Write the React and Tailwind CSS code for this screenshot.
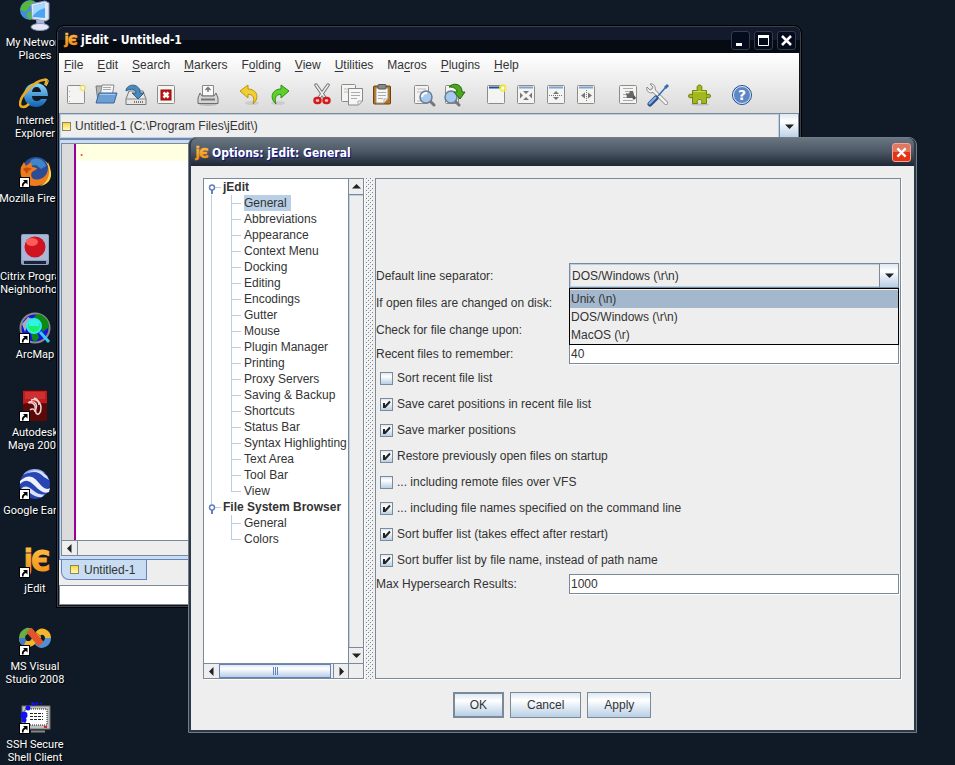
import React, { useState } from "react";

const menus = [
  ["", "F", "ile"],
  ["", "E", "dit"],
  ["", "S", "earch"],
  ["", "M", "arkers"],
  ["F", "o", "lding"],
  ["", "V", "iew"],
  ["", "U", "tilities"],
  ["Ma", "c", "ros"],
  ["", "P", "lugins"],
  ["", "H", "elp"],
];

const toolGroups = [
  ["New", "Open", "Save", "Close"],
  ["Print"],
  ["Undo", "Redo"],
  ["Cut", "Copy", "Paste"],
  ["Find", "Find Next"],
  ["New View", "Unsplit", "Split Horizontally", "Split Vertically"],
  ["Buffer Options", "Global Options"],
  ["Plugin Manager"],
  ["Help"],
];

const tree = [
  {
    name: "jEdit",
    items: [
      "General",
      "Abbreviations",
      "Appearance",
      "Context Menu",
      "Docking",
      "Editing",
      "Encodings",
      "Gutter",
      "Mouse",
      "Plugin Manager",
      "Printing",
      "Proxy Servers",
      "Saving & Backup",
      "Shortcuts",
      "Status Bar",
      "Syntax Highlighting",
      "Text Area",
      "Tool Bar",
      "View",
    ],
  },
  { name: "File System Browser", items: ["General", "Colors"] },
];

const checks = [
  { label: "Sort recent file list", on: false },
  { label: "Save caret positions in recent file list", on: true },
  { label: "Save marker positions", on: true },
  { label: "Restore previously open files on startup", on: true },
  { label: "... including remote files over VFS", on: false },
  { label: "... including file names specified on the command line", on: true },
  { label: "Sort buffer list (takes effect after restart)", on: true },
  { label: "Sort buffer list by file name, instead of path name", on: true },
];

const separators = ["Unix (\\n)", "DOS/Windows (\\r\\n)", "MacOS (\\r)"];

const metal = "bg-linear-to-b from-[#dde8f3] via-white via-30% to-[#b8cfe5]";

const JEditLogo = ({ className }) => (
  <svg className={className} viewBox="0 0 32 32" aria-hidden="true">
    <defs>
      <linearGradient id="amber" x1="0" y1="0" x2="0" y2="1">
        <stop offset="0" stopColor="#ffc34a" />
        <stop offset="1" stopColor="#f08a12" />
      </linearGradient>
    </defs>
    <g
      fill="url(#amber)"
      stroke="url(#amber)"
      strokeWidth="1"
      fontFamily="DejaVu Sans Condensed, DejaVu Sans"
      fontWeight="bold"
    >
      <text x="5" y="24" fontSize="28">j</text>
      <text x="12" y="25" fontSize="29">Є</text>
    </g>
  </svg>
);

const Shortcut = () => (
  <g>
    <rect x="0.5" y="21.5" width="10" height="10" fill="#fff" stroke="#000" />
    <path d="M4 24h4.500v4.500l-1.500-1.500c-2 .8-2.500 1.500-2.500 3.500h-1.500c-.5-2.500.5-4 2.500-5z" fill="#000" />
  </g>
);

const desktopIcons = [
  {
    label: "My Network\nPlaces",
    art: (
      <>
        <circle cx="11" cy="10" r="10" fill="#3f8fe0" />
        <path d="M3 5c4-5 9-5 12-4 1 3-2 4-4 5s-1 4-4 5-5-1-6-2zM9 12c3-1 6 0 6 3s-3 5-5 4-3-5-1-7z" fill="#55b83c" />
        <path d="M12 4l14-3 4 2v16l-3 2-14-2z" fill="#dfe6f5" stroke="#8794bd" />
        <path d="M14 6l12-3v15l-12-1z" fill="#4aa5f2" />
        <path d="M14 6l12-3v5c-6 2-9 4-12 8z" fill="#a6d8ff" />
        <path d="M17 20h8l1 6h-8z" fill="#a9b2d4" />
        <ellipse cx="21" cy="27" rx="9" ry="3.500" fill="#e4e8f6" stroke="#8b95bb" />
      </>
    ),
  },
  {
    label: "Internet\nExplorer",
    art: (
      <>
        <defs>
          <linearGradient id="ie" x1="0" y1="0" x2="0" y2="1">
            <stop offset="0" stopColor="#8fd6fa" />
            <stop offset="1" stopColor="#0d62b4" />
          </linearGradient>
        </defs>
        <path
          d="M29 18H13c0 3 2 5 5 5 2 0 3-1 4-2h6c-2 5-6 8-11 8C10 29 5 24 5 17S10 5 17 5s12 5 12 13zM13 14h9c0-3-2-5-4.500-5S13 11 13 14z"
          fill="url(#ie)"
        />
        <path d="M26 7c2-4 2-6-2-5C16 3 1 17 1 26c0 4 5 4 9 0" fill="none" stroke="#e9a920" strokeWidth="2.500" />
        <path d="M27 8c3-5 3-7-1-7" fill="none" stroke="#fbe07a" />
      </>
    ),
  },
  {
    label: "Mozilla Firefox",
    shortcut: true,
    art: (
      <>
        <circle cx="17" cy="15" r="14" fill="#2c4c96" />
        <path d="M12 4c6-4 14 0 15 6l-5 3-5-4-7 1z" fill="#3f86c9" />
        <path d="M30 8c4 12-3 22-14 22C4 30 0 20 2 11l3-5 2 4 5-4 1 5c3 0 5 1 5 2l-5 3c-3 6 3 9 8 7 7-2 9-9 8-17z" fill="#ee7b1c" />
        <path d="M26 5c7 8 5 20-5 25 8-1 12-7 11-14-1-5-2-8-6-11z" fill="#fbd64a" />
        <path d="M4 13c4-3 7-1 9 0-3 1-4 2-5 5z" fill="#c44a12" />
      </>
    ),
  },
  {
    label: "Citrix Program\nNeighborhood",
    art: (
      <>
        <rect x="2" y="0" width="28" height="31" rx="2" fill="#8ea0c4" />
        <rect x="3" y="1" width="26" height="25" fill="#a9b8d6" />
        <rect x="5" y="27" width="22" height="3" fill="#1c2333" />
        <circle cx="16" cy="13" r="10.500" fill="#cf1420" />
        <ellipse cx="13" cy="8" rx="6" ry="4" fill="#ff5b57" />
      </>
    ),
  },
  {
    label: "ArcMap",
    shortcut: true,
    art: (
      <>
        <circle cx="16" cy="16" r="14.500" fill="#1414e0" stroke="#8a8a8a" strokeWidth="2" />
        <path d="M18 2c8 1 12 7 12 13l-6 5-5-8-5-6zM12 20l7 2 1 4-4 4-3-3z" fill="#0c8a14" />
        <path d="M3 12l6-7 4 2-4 5-3 8z" fill="#a8adb3" />
        <circle cx="15" cy="14" r="7" fill="#19f06a" stroke="#35e6f2" strokeWidth="2" />
        <path d="M10 10c3-3 7-3 10 0v4H10z" fill="#2ff3e4" />
        <path d="M21 20l9 10" stroke="#38c9ff" strokeWidth="3" />
      </>
    ),
  },
  {
    label: "Autodesk\nMaya 2008",
    shortcut: true,
    art: (
      <>
        <rect x="4" y="0" width="24" height="31" rx="1" fill="#5a0808" />
        <path d="M4 1h24v12C20 14 12 11 4 14z" fill="#c41a1a" />
        <path d="M6 2h20v7H6z" fill="#d64545" opacity=".5" />
        <g fill="none" stroke="#f4d4d4" strokeWidth="1.500">
          <path d="M12 10c6-2 10 3 10 8s-3 8-5 5 2-6 0-9-6-3-8-1" />
          <path d="M10 13c4-1 7 2 6 6M11 20c2-2 5-1 5 2M15 8c4 1 5 4 5 7" />
        </g>
      </>
    ),
  },
  {
    label: "Google Earth",
    shortcut: true,
    art: (
      <>
        <circle cx="16" cy="16" r="15" fill="#2746b4" />
        <path d="M4 7c5-7 16-8 22-2C17 3 10 4 4 7z" fill="#8fa6ea" />
        <path d="M1 13C10 5 15 9 20 15s8 7 11 5l-1 4c-5 2-9-1-14-6S7 10 1 16z" fill="#eef2ff" />
        <path d="M9 5c7-3 12 0 16 4l5 3-2-4C23 2 15 0 9 5zM2 21c4-5 8-2 13 2s9 4 11 3l-3 3c-5 1-9-2-12-4s-6-3-8-1z" fill="#d8e0fb" />
      </>
    ),
  },
  { label: "jEdit", shortcut: true, logo: true },
  {
    label: "MS Visual\nStudio 2008",
    shortcut: true,
    art: (
      <g fill="none" strokeWidth="6">
        <path d="M13 9C9 4 3 9 3 14" stroke="#69ad43" />
        <path d="M3 14c0 6 7 8 11 4l6-7" stroke="#f2b62c" />
        <path d="M3 14c0 2 1 4 3 5" stroke="#3d7cc9" />
        <path d="M18 18c5 6 11 1 11-4" stroke="#4f8fd6" />
        <path d="M19 10c4-5 10-1 10 4" stroke="#f2b62c" />
        <path d="M10 6l12 14" stroke="#e2542b" strokeWidth="7" />
      </g>
    ),
  },
  {
    label: "SSH Secure\nShell Client",
    shortcut: true,
    art: (
      <>
        <rect x="3" y="4" width="28" height="23" fill="#c0c0c0" stroke="#6e6e6e" />
        <rect x="6" y="7" width="22" height="16" fill="#fff" stroke="#222" strokeDasharray="1 1" />
        <path d="M11 11.500h13M11 14.500h13M11 17.500h13" stroke="#222" strokeDasharray="3 1" />
        <path d="M12 29.500h14" stroke="#888" strokeWidth="2" />
        <path d="M25 25h3" stroke="#d03020" strokeWidth="2" />
        <g fill="#1212f0">
          <circle cx="5" cy="13" r="3.500" />
          <circle cx="9" cy="6" r="2.500" />
          <circle cx="14" cy="2" r="2" />
          <circle cx="18" cy="1.500" r="1.300" />
          <circle cx="22" cy="1.500" r="1" />
          <circle cx="5" cy="18" r="2.500" />
        </g>
      </>
    ),
  },
];

const Page = ({ x = 3, y = 2, w = 18, h = 19 }) => (
  <rect x={x + 0.5} y={y + 0.5} width={w - 1} height={h - 1} rx="1" fill="#f4f4f2" stroke="#8c8c8a" />
);

const Frame = () => (
  <>
    <Page />
    <path d="M5 4.500h14" stroke="#7ea3cf" strokeWidth="2" />
  </>
);

const Lens = () => (
  <>
    <path d="M17 17l5 5" stroke="#777" strokeWidth="3" strokeLinecap="round" />
    <circle cx="14" cy="14" r="6" fill="#a9caf0" stroke="#6d7d92" strokeWidth="1.500" />
    <path d="M10 14c0-3 3-4 5-4" stroke="#fff" strokeWidth="2" fill="none" />
  </>
);

const toolArt = {
  New: (
    <>
      <Page />
      <path d="M5.500 8v11" stroke="#aaa" strokeDasharray="1 4" />
      <circle cx="19" cy="5" r="3.500" fill="#f3e27c" opacity=".8" />
      <circle cx="19" cy="5" r="1.300" fill="#fff" />
    </>
  ),
  Open: (
    <>
      <path d="M2 3h7l1 2h8v14H4z" fill="#b8b8b4" stroke="#777" />
      <path d="M8 2h12l-2 12H6z" fill="#f7f7f7" stroke="#888" />
      <path d="M9 4.500h8M9 6.500h8" stroke="#aaa" />
      <path d="M5 10h18l-3 10H2z" fill="#6d9fd3" stroke="#3566a5" />
      <path d="M6 11.500h15" stroke="#a9caec" />
    </>
  ),
  Save: (
    <>
      <path d="M5 8h14l3 8v5.500H2V16z" fill="#e6e6e4" stroke="#777" />
      <path d="M2.500 16h19" stroke="#888" />
      <path d="M10 19h9" stroke="#777" strokeWidth="2" strokeDasharray="1 1" />
      <path d="M2 8c0-6 10-9 14-1v3h4l-6 6-6-6h4c0-4-5-5-10-2z" fill="#4d88bb" stroke="#2a5d8d" />
    </>
  ),
  Close: (
    <>
      <Page />
      <rect x="7" y="7" width="10" height="10" fill="#c91414" stroke="#8b0c0c" />
      <path d="M9.500 9.500l5 5M14.500 9.500l-5 5" stroke="#fff" strokeWidth="2.500" />
    </>
  ),
  Print: (
    <>
      <ellipse cx="12" cy="21.500" rx="9" ry="1.500" fill="#bbb" />
      <path d="M6.500 2.500h11V13h-11z" fill="#fafafa" stroke="#888" />
      <path d="M12 9V5M9.500 7L12 4.500 14.500 7" stroke="#777" strokeWidth="1.500" fill="none" />
      <path d="M4 10l2 3h12l2-3 2 5v5.500H2V15z" fill="#d5d5d3" stroke="#6d6d6b" />
      <path d="M5 16.500h14" stroke="#777" strokeWidth="2" />
    </>
  ),
  Undo: (
    <>
      <ellipse cx="14" cy="20" rx="7" ry="2" fill="#ccc" />
      <path d="M2 8l8-6v4c9 0 12 9 5 15 2-6 0-10-5-9.500V15z" fill="#f0cf2e" stroke="#b8930e" strokeLinejoin="round" />
    </>
  ),
  Redo: (
    <>
      <ellipse cx="10" cy="20" rx="7" ry="2" fill="#ccc" />
      <path d="M21 8l-8-6v4C4 6 1 15 8 21c-2-6 0-10 5-9.500V15z" fill="#5cd02b" stroke="#338c12" strokeLinejoin="round" />
    </>
  ),
  Cut: (
    <>
      <path d="M6 2l9 13M18 2L9 15" stroke="#777" strokeWidth="3.500" strokeLinecap="round" />
      <path d="M6 2l9 13M18 2L9 15" stroke="#eee" strokeWidth="1.500" strokeLinecap="round" />
      <rect x="4.500" y="15" width="6" height="5" rx="2.500" fill="#f7c9c9" stroke="#d51a1f" strokeWidth="2.500" />
      <rect x="13.500" y="15" width="6" height="5" rx="2.500" fill="#f7c9c9" stroke="#d51a1f" strokeWidth="2.500" />
    </>
  ),
  Copy: (
    <>
      <Page x={1} y={1} w={15} h={18} />
      <path d="M4 6h8M4 9h8" stroke="#bbb" />
      <path d="M8.500 5.500h14V18l-4 4h-10z" fill="#f6f6f4" stroke="#888" />
      <path d="M11 9.500h9M11 12.500h9M11 15.500h6M18 22v-4h4" stroke="#aaa" fill="none" />
    </>
  ),
  Paste: (
    <>
      <rect x="3.500" y="3" width="17" height="18" rx="1" fill="#b87319" stroke="#6d420b" />
      <path d="M6 5h12v11l-4 4H6z" fill="#f7f7f5" stroke="#999" />
      <rect x="8" y="1.500" width="8" height="4.500" rx="1" fill="#888" stroke="#555" />
      <path d="M8 9.500h8M8 12.500h8M8 15.500h5M14 20v-4h4" stroke="#aaa" fill="none" />
    </>
  ),
  Find: (
    <>
      <Page x={2} y={2} w={15} h={19} />
      <path d="M5 6h9M5 9h5M5 18h5" stroke="#bbb" />
      <Lens />
    </>
  ),
  "Find Next": (
    <>
      <Page x={3} y={2} w={14} h={19} />
      <path d="M13 18l4 4" stroke="#777" strokeWidth="3" strokeLinecap="round" />
      <circle cx="9" cy="14" r="6" fill="#a9caf0" stroke="#6d7d92" strokeWidth="1.500" />
      <path d="M7 4c4-5 13-3 13 4v1h3l-5 7-6-7h3c0-3-3-5-8-5z" fill="#49a81c" stroke="#256a08" strokeLinejoin="round" />
    </>
  ),
  "New View": (
    <>
      <Page />
      <path d="M5 4.500h12" stroke="#1e4f9c" strokeWidth="2" />
      <circle cx="19" cy="5" r="4" fill="#f5ee45" opacity=".8" />
      <circle cx="19" cy="5" r="1.500" fill="#fffff0" />
    </>
  ),
  Unsplit: (
    <>
      <Frame />
      <path d="M12 11l-3-3h6zM12 14l-3 3h6zM9 12.500l-3-3v6zM15 12.500l3-3v6z" fill="#777" />
    </>
  ),
  "Split Horizontally": (
    <>
      <Frame />
      <path d="M5 12.500h14" stroke="#777" strokeDasharray="1 1" />
      <path d="M12 8l-3 3h6zM12 17l-3-3h6z" fill="#777" />
    </>
  ),
  "Split Vertically": (
    <>
      <Frame />
      <path d="M12.500 7v12" stroke="#777" strokeDasharray="1 1" />
      <path d="M7 12.500l4-3v6zM18 12.500l-4-3v6z" fill="#777" />
    </>
  ),
  "Buffer Options": (
    <>
      <Page />
      <path d="M7 5.500h10M9 8.500h8M7 11.500h4M7 14.500h4M7 17.500h10" stroke="#aaa" />
      <path d="M12 12h4l3 4" stroke="#555" strokeWidth="3" fill="none" />
      <path d="M10 10l3 1 1-3h3l1 4-2 3-5 0z" fill="#666" />
    </>
  ),
  "Global Options": (
    <>
      <path d="M7 7l13 13" stroke="#888" strokeWidth="4" strokeLinecap="round" />
      <path d="M4 1l3 3-1 2-2 1-3-3c-1 3 1 6 5 6l3-3C10 4 8 0 4 1z" fill="#f0f0ee" stroke="#888" />
      <path d="M7 7l13 13" stroke="#f2f2f0" strokeWidth="2.500" strokeLinecap="round" />
      <path d="M20 4l-8 9" stroke="#3b6cb0" strokeWidth="1.500" />
      <path d="M22 2l-3 3" stroke="#3b6cb0" strokeWidth="3" />
      <path d="M10 15l-6 6" stroke="#2b5392" strokeWidth="5" strokeLinecap="round" />
      <path d="M9.500 14.500l-6 6" stroke="#8db2e2" strokeWidth="2" strokeLinecap="round" />
    </>
  ),
  "Plugin Manager": (
    <>
      <ellipse cx="12" cy="21.500" rx="9" ry="1" fill="#bbb" />
      <path
        d="M4.500 7.500h5c-1-3-.5-5.500 2-5.500s3 2.500 2 5.500h5v4.500c2-1.500 4-1 4 1s-2 2.500-4 1v6.500h-5c1-2.500 0-4-2-4s-3 1.500-2 4h-5V14c-2 1.500-4 1-4-1s2-2.500 4-1z"
        fill="#a2b81d"
        stroke="#6f8408"
        strokeLinejoin="round"
      />
      <path d="M5.500 8.500h12" stroke="#cbdc5d" />
    </>
  ),
  Help: (
    <>
      <circle cx="12" cy="12" r="9.500" fill="#5c86c6" stroke="#27508f" />
      <circle cx="12" cy="12" r="8.500" fill="none" stroke="#dbe6f6" />
      <text x="12" y="17" textAnchor="middle" fontSize="14" fontWeight="bold" fill="#fff" fontFamily="DejaVu Sans">?</text>
    </>
  ),
};

const Arrow = ({ dir }) => (
  <svg className="h-[9px] w-[9px]" viewBox="0 0 9 9" aria-hidden="true" fill="#222">
    {dir === "up" && <path d="M0 6.500h9L4.500 2z" />}
    {dir === "down" && <path d="M0 2.500h9L4.500 7z" />}
    {dir === "left" && <path d="M6.500 0v9L2 4.500z" />}
    {dir === "right" && <path d="M2.500 0v9L7 4.500z" />}
  </svg>
);

const ComboBox = ({ id, value, options, onChange }) => (
  <div className="relative grid h-[25px] grid-cols-[1fr_19px] border border-[#7a8a99]">
    <select
      id={id}
      value={value}
      onChange={onChange}
      className="col-span-2 col-start-1 row-start-1 h-full w-full appearance-none border border-[#b8cfe5] bg-[#eeeeee] pl-px outline-none"
    >
      {options.map((o) => (
        <option key={o}>{o}</option>
      ))}
    </select>
    <span
      className={`pointer-events-none z-10 col-start-2 row-start-1 flex items-center justify-center border-l border-[#7a8a99] ${metal}`}
    >
      <Arrow dir="down" />
    </span>
  </div>
);

const ScrollButton = ({ dir, className }) => (
  <button
    aria-label={`Scroll ${dir}`}
    className={`flex shrink-0 items-center justify-center border-[#7a8a99] bg-[#eeeeee] ${className}`}
  >
    <Arrow dir={dir} />
  </button>
);

const Tree = ({ selected, onSelect }) => (
  <ul className="min-h-0 overflow-hidden bg-white leading-4 whitespace-nowrap">
    {tree.map((node, n) => {
      const lastNode = n === tree.length - 1;
      return (
        <li key={node.name}>
          <div className="flex h-4 font-bold">
            <svg className="h-4 w-[19px] shrink-0" viewBox="0 0 19 16" aria-hidden="true">
              {n > 0 && <path d="M7.500 0v6" stroke="#b8cfe5" />}
              <path d="M11 8.500h6" stroke="#b8cfe5" />
              <path d="M8 10v5" stroke="#6382bf" strokeWidth="2" />
              <circle cx="8" cy="8.500" r="2.500" fill="#fff" stroke="#6382bf" strokeWidth="1.500" />
            </svg>
            {node.name}
          </div>
          <ul>
            {node.items.map((item, i) => (
              <li key={item} className="flex h-4 pl-[7px]">
                <span className={`w-5 shrink-0 border-l ${lastNode ? "border-transparent" : "border-[#b8cfe5]"}`} />
                <span className="mr-[3px] flex w-[10px] shrink-0 flex-col">
                  <span className="h-[9px] border-b border-l border-[#b8cfe5]" />
                  {i < node.items.length - 1 && <span className="flex-1 border-l border-[#b8cfe5]" />}
                </span>
                <button
                  onClick={() => onSelect(`${node.name}/${item}`)}
                  className={`pr-[4px] ${selected === `${node.name}/${item}` ? "bg-[#b8cfe5]" : ""}`}
                >
                  {item}
                </button>
              </li>
            ))}
          </ul>
        </li>
      );
    })}
  </ul>
);

const FormRow = ({ id, label, children }) => (
  <div className="grid grid-cols-[193px_1fr] items-center">
    <label htmlFor={id}>{label}</label>
    {children}
  </div>
);

const fieldClass =
  "h-5 w-full border border-[#7a8a99] bg-white px-px outline-none shadow-[1px_1px_0_#fff]";

const EditorWindow = () => (
  <section className="absolute top-[25px] right-[153px] bottom-[157px] left-14 flex flex-col rounded-t-lg border border-black bg-[#10131a] p-px shadow-[inset_0_0_0_1px_#3c424c]">
    <header className="flex h-[26px] shrink-0 items-center gap-[3px] rounded-t-md bg-linear-to-b from-[#121a2b] from-50% to-[#060a12] to-50% pr-1 pl-1 text-white">
      <JEditLogo className="h-4 w-4" />
      <h1 className="flex-1 font-['DejaVu_Sans_Condensed','DejaVu_Sans',sans-serif] text-[12px] font-bold">
        jEdit - Untitled-1
      </h1>
      <div className="flex gap-1">
        {["Minimize", "Maximize", "Close"].map((name) => (
          <button
            key={name}
            aria-label={name}
            className="flex h-[19px] w-[19px] items-center justify-center rounded-[3px] border border-[#333c4b] bg-[#040b1c]"
          >
            <svg className="h-[13px] w-[13px]" viewBox="0 0 13 13" fill="none" stroke="#fff">
              {name === "Minimize" && <path d="M2 10.500h6" strokeWidth="3" />}
              {name === "Maximize" && (
                <>
                  <path d="M1.500 1.500h10v10h-10z" />
                  <path d="M1 2.500h11" strokeWidth="3" />
                </>
              )}
              {name === "Close" && <path d="M2 2l9 9M11 2l-9 9" strokeWidth="2.500" />}
            </svg>
          </button>
        ))}
      </div>
    </header>
    <div className="mx-px mb-px flex min-h-0 flex-1 flex-col bg-[#eeeeee]">
      <div className="bg-linear-to-b from-white to-[#dadada]">
        <nav className="flex h-[23px] items-center gap-[14px] pl-[5px]">
          {menus.map(([a, key, b]) => (
            <button key={a + key + b}>
              {a}
              <span className="underline underline-offset-2">{key}</span>
              {b}
            </button>
          ))}
        </nav>
        <div className="flex h-[37px] items-center gap-[18px] pl-[5px]">
          {toolGroups.map((group) => (
            <div key={group[0]} className="flex gap-[6px]">
              {group.map((name) => (
                <button key={name} aria-label={name}>
                  <svg className="h-6 w-6" viewBox="0 0 24 24" fill="none" aria-hidden="true">
                    {toolArt[name]}
                  </svg>
                </button>
              ))}
            </div>
          ))}
        </div>
      </div>
      <div className="grid grid-cols-[1fr_19px] border border-[#7a8a99]">
        <div className="flex h-6 items-center gap-1 border border-[#b8cfe5] pl-px">
          <span className="h-[9px] w-[9px] border border-[#8a8365] bg-linear-to-b from-[#fbd62c] to-[#fff9b8]" />
          Untitled-1 (C:\Program Files\jEdit\)
        </div>
        <button
          aria-label="Switch buffer"
          className={`flex items-center justify-center border-l border-[#7a8a99] ${metal}`}
        >
          <Arrow dir="down" />
        </button>
      </div>
      <div className="flex min-h-0 flex-1 flex-col border-x border-t border-[#6382bf] bg-[#c8ddf2] px-px pt-[3px] pb-[3px]">
        <div className="flex min-h-0 flex-1 border border-[#7a8a99] bg-white">
          <div className="box-content w-3 border-r-2 border-[#990099] bg-[#dbdbdb]" />
          <div className="flex-1">
            <div className="h-[17px] bg-[#ffffe1] pl-1 leading-[17px] font-bold text-[#ff5533]">.</div>
          </div>
        </div>
        <div className="flex h-[15px] border-x border-b border-[#7a8a99] bg-[#eeeeee]">
          <ScrollButton dir="left" className="w-4 border-r" />
        </div>
      </div>
      <div className="flex h-[26px] shrink-0 items-start border-t border-[#6382bf] pl-[2px]">
        <button className="flex h-5 items-center gap-[5px] rounded-bl-lg border-r border-b border-l border-[#6382bf] bg-[#c8ddf2] pr-[11px] pl-2">
          <span className="h-[9px] w-[9px] border border-[#8a8365] bg-linear-to-b from-[#fbd62c] to-[#fff9b8]" />
          Untitled-1
        </button>
      </div>
      <div className="h-5 shrink-0 border border-[#7a8a99] bg-white" />
    </div>
  </section>
);

const OptionsDialog = () => {
  const [selected, setSelected] = useState("jEdit/General");
  const [separator, setSeparator] = useState(separators[1]);

  return (
    <section
      role="dialog"
      aria-label="Options"
      className="absolute top-[137px] right-[38px] bottom-8 left-[188px] flex flex-col rounded-t-lg border border-[#6f7b87] bg-[#2d3848] px-[2px] pb-[2px]"
    >
      <header className="flex h-7 shrink-0 items-center gap-[3px] rounded-t-md bg-linear-to-b from-[#697580] from-0% via-[#4d5866] via-48% to-[#1f2735] pt-px pr-[3px] pl-[2px] text-white">
        <JEditLogo className="h-4 w-4" />
        <h2 className="flex-1 font-['DejaVu_Sans_Condensed','DejaVu_Sans',sans-serif] text-[12px] font-bold [text-shadow:1px_1px_0_#10108c]">
          Options: jEdit: General
        </h2>
        <button
          aria-label="Close"
          className="flex h-[19px] w-[19px] items-center justify-center rounded-[3px] border border-[#f0a598] bg-linear-to-b from-[#e2775f] from-45% to-[#e63312] to-50%"
        >
          <svg className="h-[11px] w-[11px]" viewBox="0 0 12 12" fill="none" stroke="#fff" strokeWidth="2.500">
            <path d="M1.500 1.500l9 9M10.500 1.500l-9 9" />
          </svg>
        </button>
      </header>
      <div className="flex min-h-0 flex-1 flex-col bg-[#eeeeee] py-3 pr-[13px] pl-3">
        <div className="flex min-h-0 flex-1">
          <div className="grid w-[161px] shrink-0 grid-cols-[1fr_15px] grid-rows-[1fr_15px] border border-[#7a8a99] shadow-[1px_1px_0_#fff]">
            <Tree selected={selected} onSelect={setSelected} />
            <div className="flex flex-col justify-between border-l border-[#7a8a99]">
              <ScrollButton dir="up" className="h-4 border-b" />
              <div className="flex-1 border-t border-l border-[#b8cfe5]" />
              <ScrollButton dir="down" className="h-4 border-t" />
            </div>
            <div className="flex border-t border-[#7a8a99]">
              <ScrollButton dir="left" className="w-[15px]" />
              <div className="flex flex-1 items-center justify-center gap-px border border-[#6382bf] bg-linear-to-b from-[#dde8f3] via-white via-30% to-[#b8cfe5]">
                <span className="h-2 w-px bg-[#6382bf]" />
                <span className="h-2 w-px bg-[#6382bf]" />
                <span className="h-2 w-px bg-[#6382bf]" />
              </div>
              <ScrollButton dir="right" className="ml-[2px] w-[15px] border-l" />
            </div>
            <div className="border-t border-l border-[#7a8a99]" />
          </div>
          <svg className="mx-[2px] h-full w-[7px] shrink-0" aria-hidden="true">
            <defs>
              <pattern id="bumps" width="4" height="4" patternUnits="userSpaceOnUse">
                <rect width="1" height="1" fill="#7a8a99" />
                <rect x="1" y="1" width="1" height="1" fill="#fff" />
                <rect x="2" y="2" width="1" height="1" fill="#7a8a99" />
                <rect x="3" y="3" width="1" height="1" fill="#fff" />
              </pattern>
            </defs>
            <rect width="100%" height="100%" fill="url(#bumps)" />
          </svg>
          <form
            onSubmit={(e) => e.preventDefault()}
            className="flex min-w-0 flex-1 flex-col justify-center gap-[2px] border border-[#7a8a99] pr-px shadow-[1px_1px_0_#fff]"
          >
            <FormRow id="separator" label="Default line separator:">
              <div className="relative">
                <ComboBox
                  id="separator"
                  value={separator}
                  options={separators}
                  onChange={(e) => setSeparator(e.target.value)}
                />
                <ul className="absolute top-full right-0 left-0 z-20 border border-black bg-[#eeeeee] pt-px">
                  {separators.map((s, i) => (
                    <li key={s} className={`h-[18px] pl-px leading-[18px] ${i === 0 ? "bg-[#a3b8cc]" : ""}`}>
                      {s}
                    </li>
                  ))}
                </ul>
              </div>
            </FormRow>
            <FormRow id="changed" label="If open files are changed on disk:">
              <ComboBox id="changed" options={["prompt"]} />
            </FormRow>
            <FormRow id="check" label="Check for file change upon:">
              <ComboBox id="check" options={["application focus"]} />
            </FormRow>
            <FormRow id="recent" label="Recent files to remember:">
              <input id="recent" className={fieldClass} defaultValue="40" />
            </FormRow>
            {checks.map((c) => (
              <label key={c.label} className="flex h-6 items-center gap-1 pl-1">
                <span className="grid h-[13px] w-[13px]">
                  <input
                    type="checkbox"
                    defaultChecked={c.on}
                    className="peer col-start-1 row-start-1 h-[13px] w-[13px] appearance-none border border-[#7a8a99] bg-linear-to-b from-[#dde8f3] via-white via-30% to-[#b8cfe5]"
                  />
                  <svg
                    className="pointer-events-none invisible col-start-1 row-start-1 h-[13px] w-[13px] peer-checked:visible"
                    viewBox="0 0 13 13"
                    fill="none"
                    stroke="#222"
                    strokeWidth="2"
                  >
                    <path d="M4 5v5M4.500 9.500l5.500-6" />
                  </svg>
                </span>
                {c.label}
              </label>
            ))}
            <FormRow id="max" label="Max Hypersearch Results:">
              <input id="max" className={fieldClass} defaultValue="1000" />
            </FormRow>
          </form>
        </div>
        <div className="mt-[13px] flex justify-center gap-[6px]">
          {["OK", "Cancel", "Apply"].map((name, i) => (
            <button
              key={name}
              className={`h-[26px] border-[#7a8a99] ${i === 0 ? "border-2 px-[15px]" : "border px-4"} ${metal}`}
            >
              {name}
            </button>
          ))}
        </div>
      </div>
    </section>
  );
};

const App = () => {
  return (
    <main className="relative min-h-screen overflow-hidden bg-[#101a26] font-['Liberation_Sans',Arial,sans-serif] text-[12px] text-[#333333]">
      <ul className="flex w-[70px] flex-col gap-4">
        {desktopIcons.map((icon) => (
          <li key={icon.label} className="flex h-[62px] flex-col items-center gap-1">
            <svg className="h-8 w-8 shrink-0" viewBox="0 0 32 32" aria-hidden="true">
              {icon.logo ? <JEditLogo /> : icon.art}
              {icon.shortcut && <Shortcut />}
            </svg>
            <span className="text-center font-['Roboto','Liberation_Sans',sans-serif] text-[11px] leading-[13px] whitespace-pre text-white [text-shadow:1px_1px_1px_#000]">
              {icon.label}
            </span>
          </li>
        ))}
      </ul>
      <EditorWindow />
      <OptionsDialog />
    </main>
  );
};

export default App;
